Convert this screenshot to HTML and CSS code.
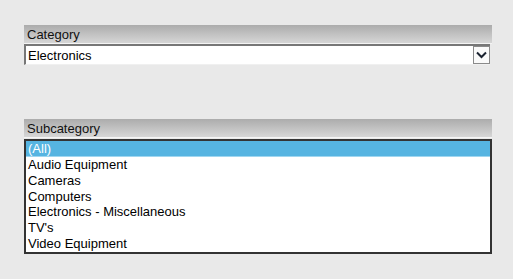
FILE: index.html
```html
<!DOCTYPE html>
<html>
<head>
<meta charset="utf-8">
<link rel="stylesheet" href="styles.css">
</head>
<body>
<div class="page">
  <section class="field">
    <div class="header">Category</div>
    <div class="select">
      <span class="value">Electronics</span>
      <span class="btn"><svg width="11" height="8" viewBox="0 0 11 8"><path d="M1 1.5 L5.5 6 L10 1.5" fill="none" stroke="#1a2230" stroke-width="2"/></svg></span>
    </div>
  </section>
  <section class="field sub">
    <div class="header">Subcategory</div>
    <ul class="list">
      <li class="sel">(All)</li>
      <li>Audio Equipment</li>
      <li>Cameras</li>
      <li>Computers</li>
      <li>Electronics - Miscellaneous</li>
      <li>TV's</li>
      <li>Video Equipment</li>
    </ul>
  </section>
</div>
</body>
</html>
```
FILE: styles.css
```css
html, body {
  margin: 0;
  padding: 0;
  background: #e9e9e9;
  font-family: "Liberation Sans", Arial, sans-serif;
  font-size: 13px;
  color: #000;
}
.page {
  display: flex;
  flex-direction: column;
  padding: 25px 21px 0 24px;
  gap: 54px;
}
.field {
  display: flex;
  flex-direction: column;
}
.header {
  height: 18px;
  line-height: 19px;
  padding-left: 3px;
  background: linear-gradient(#acacac, #d6d6d6);
  border-bottom: 1px solid #f4f4f4;
  color: #111;
}
.select {
  display: flex;
  align-items: stretch;
  height: 18px;
  margin-right: 2px;
  background: #fff;
  border-top: 2px solid #777;
  border-left: 2px solid #777;
  border-bottom: 1px solid #f0f0f0;
}
.select .value {
  flex: 1;
  line-height: 19px;
  padding-left: 2px;
}
.btn {
  width: 15px;
  display: flex;
  align-items: center;
  justify-content: center;
  border: 1px solid #8a8a8a;
  background: #fafafa;
}
.sub .header {
  margin-bottom: 1px;
}
.list {
  list-style: none;
  margin: 0;
  border: 2px solid #333;
  background: #fff;
  padding: 0;
}
.list li {
  height: 15.8px;
  line-height: 16px;
  padding-left: 2px;
}
.list li.sel {
  background: #56b4e1;
  color: #fff;
  border-bottom: 1px solid #9fd6f0;
  height: 15px;
}
```
